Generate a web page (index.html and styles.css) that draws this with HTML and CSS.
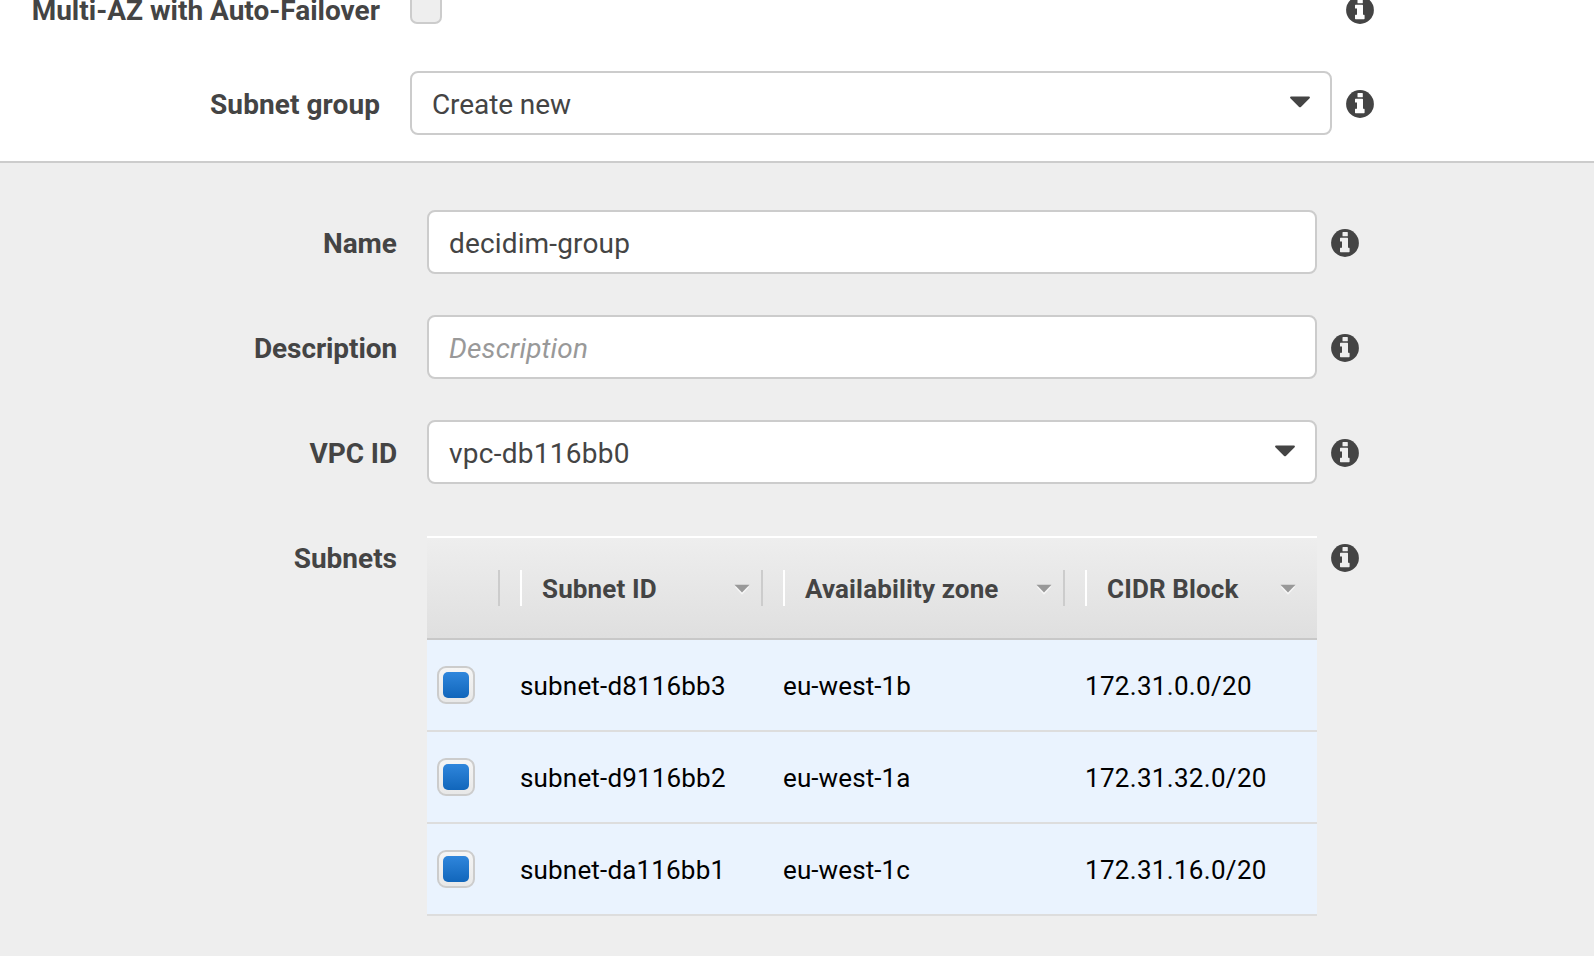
FILE: index.html
```
<!DOCTYPE html>
<html lang="en">
<head>
<meta charset="utf-8">
<title>Subnet group</title>
<link rel="stylesheet" href="styles.css">
</head>
<body>
<svg class="defs" aria-hidden="true">
  <symbol id="info" viewBox="0 0 28 28">
    <circle cx="14" cy="14" r="13.9" fill="#444"/>
    <path class="info-mark" d="M12 3h4.300q.5 0 .5.5v3.200q0 .5-.5.5H12q-.5 0-.5-.5V3.500q0-.5.5-.5zM9.600 8.800h6.800q.6 0 .6.6v9.400h1q.6 0 .6.6v3.200q0 .6-.6.6H9.600q-.6 0-.6-.6v-3.200q0-.6.6-.6h1.400v-6.200H9.600q-.6 0-.6-.6V9.400q0-.6.6-.6z"/>
  </symbol>
  <symbol id="caret" viewBox="0 0 20 12">
    <path d="M.8.5h18.400q1.200.6.4 1.700l-8.700 8.700q-.9.9-1.800 0L.4 2.200Q-.4 1.100.8.5z" fill="#444"/>
  </symbol>
  <symbol id="sort" viewBox="0 0 16 12">
    <path d="M.5 2.500h15L8 10.800z" fill="#f7f7f7"/>
    <path d="M.5.7h15L8 8.600z" fill="#999"/>
  </symbol>
</svg>

<section class="settings">
  <div class="field field-top">
    <label class="label">Multi-AZ with Auto-Failover</label>
    <span class="checkbox-slot"><span class="checkbox-off"></span></span>
    <svg class="info"><use href="#info"/></svg>
  </div>
  <div class="field">
    <label class="label label-wide">Subnet group</label>
    <div class="control"><span class="value-tight">Create new</span><svg class="caret"><use href="#caret"/></svg></div>
    <svg class="info"><use href="#info"/></svg>
  </div>
</section>

<section class="group">
  <div class="field">
    <label class="label">Name</label>
    <div class="control"><span class="value">decidim-group</span></div>
    <svg class="info"><use href="#info"/></svg>
  </div>
  <div class="field">
    <label class="label label-tight">Description</label>
    <div class="control"><span class="value placeholder">Description</span></div>
    <svg class="info"><use href="#info"/></svg>
  </div>
  <div class="field">
    <label class="label label-tight">VPC ID</label>
    <div class="control"><span class="value-id">vpc-db116bb0</span><svg class="caret"><use href="#caret"/></svg></div>
    <svg class="info"><use href="#info"/></svg>
  </div>
  <div class="field field-table">
    <label class="label">Subnets</label>
    <div class="table">
      <div class="row head">
        <div class="th th-check"></div>
        <div class="th"><span>Subnet ID</span><svg class="sort"><use href="#sort"/></svg></div>
        <div class="th"><span>Availability zone</span><svg class="sort"><use href="#sort"/></svg></div>
        <div class="th th-last"><span>CIDR Block</span><svg class="sort"><use href="#sort"/></svg></div>
      </div>
      <div class="row body">
        <span class="check"><span class="check-fill"></span></span>
        <span class="td">subnet-d8116bb3</span><span class="td zone">eu-west-1b</span><span class="td cidr">172.31.0.0/20</span>
      </div>
      <div class="row body">
        <span class="check"><span class="check-fill"></span></span>
        <span class="td">subnet-d9116bb2</span><span class="td zone">eu-west-1a</span><span class="td cidr">172.31.32.0/20</span>
      </div>
      <div class="row body">
        <span class="check"><span class="check-fill"></span></span>
        <span class="td">subnet-da116bb1</span><span class="td zone">eu-west-1c</span><span class="td cidr">172.31.16.0/20</span>
      </div>
    </div>
    <svg class="info"><use href="#info"/></svg>
  </div>
</section>
</body>
</html>
```
FILE: styles.css
```
* { box-sizing: border-box; }

body {
  margin: 0;
  height: 956px;
  overflow: hidden;
  background: #eee;
  color: #444;
  font: 28px/34px Roboto, "Liberation Sans", sans-serif;
}

.defs { display: none; }

.settings {
  --label: 380px;
  --control: 922px;
  --mark: #fff;
  height: 163px;
  overflow: hidden;
  background: #fff;
  border-bottom: 2px solid #ccc;
}

.group {
  --label: 397px;
  --control: 890px;
  --mark: #eee;
  display: flex;
  flex-direction: column;
  gap: 41px;
  padding-top: 47px;
}

.field {
  display: grid;
  grid-template-columns: var(--label) var(--control) 28px;
  align-items: center;
  height: 64px;
}

.field > :nth-child(2) { margin-left: 30px; margin-right: -30px; }
.field > :nth-child(3) { margin-left: 44px; }

.settings .field { margin-bottom: 30px; }
.settings .field-top { margin-top: -23px; }

.label {
  padding-top: 4px;
  font-weight: 700;
  text-align: right;
  white-space: nowrap;
}

.label-wide { letter-spacing: 0.08px; }
.label-tight { letter-spacing: -0.1px; }

.info {
  display: block;
  width: 28px;
  height: 28px;
  margin-top: 2px;
}

.info-mark { fill: var(--mark); }

.control {
  display: flex;
  align-items: center;
  justify-content: space-between;
  height: 64px;
  padding: 4px 20px 0;
  background: #fff;
  border: 2px solid #ccc;
  border-radius: 8px;
}

.value { letter-spacing: 0.15px; }
.value-tight { letter-spacing: -0.1px; }
.value-id { letter-spacing: 0.27px; }
.placeholder { color: #999; font-style: italic; }

.caret { width: 20px; height: 12px; margin-bottom: 6px; }

.checkbox-slot { display: flex; }

.checkbox-off {
  width: 32px;
  height: 32px;
  margin-top: -2px;
  background: #eee;
  border: 2px solid #ccc;
  border-radius: 7px;
}

.field-table { align-items: start; height: auto; }
.field-table .label { padding-top: 17px; }
.field-table .info { margin-top: 19px; }

.table {
  margin-top: 11px;
  color: #000;
  font-size: 26px;
  line-height: 32px;
}

.row {
  display: grid;
  grid-template-columns: 73px 243px 282px 232px;
  column-gap: 20px;
  align-items: center;
}

.head {
  height: 104px;
  border-top: 2px solid #fff;
  border-bottom: 2px solid #c8c8c8;
  background: linear-gradient(#eee, #dfdfdf);
  color: #444;
  font-weight: 700;
  letter-spacing: 0.13px;
}

.th {
  display: flex;
  align-items: center;
  justify-content: space-between;
  height: 36px;
  padding: 2px 11px 0 20px;
  border-left: 2px solid #fff;
  border-right: 2px solid #ccc;
}

.th-check { border-left: 0; }
.th-last { border-right: 0; padding-right: 21px; }

.sort { width: 16px; height: 12px; margin-top: 2px; }

.body {
  height: 92px;
  background: #eaf3fe;
  border-bottom: 2px solid #ddd;
}

.td { padding-top: 2px; white-space: nowrap; letter-spacing: 0.17px; }
.zone { letter-spacing: 0.1px; }
.cidr { letter-spacing: 0.31px; }

.check {
  display: grid;
  place-items: center;
  width: 38px;
  height: 38px;
  margin-left: 10px;
  background: linear-gradient(#f5f5f5, #e8e8e8);
  border: 2px solid #ccc;
  border-radius: 9px;
}

.check-fill {
  width: 26px;
  height: 26px;
  border-radius: 5px;
  background: linear-gradient(#2f86dc, #1166bb);
}
```
